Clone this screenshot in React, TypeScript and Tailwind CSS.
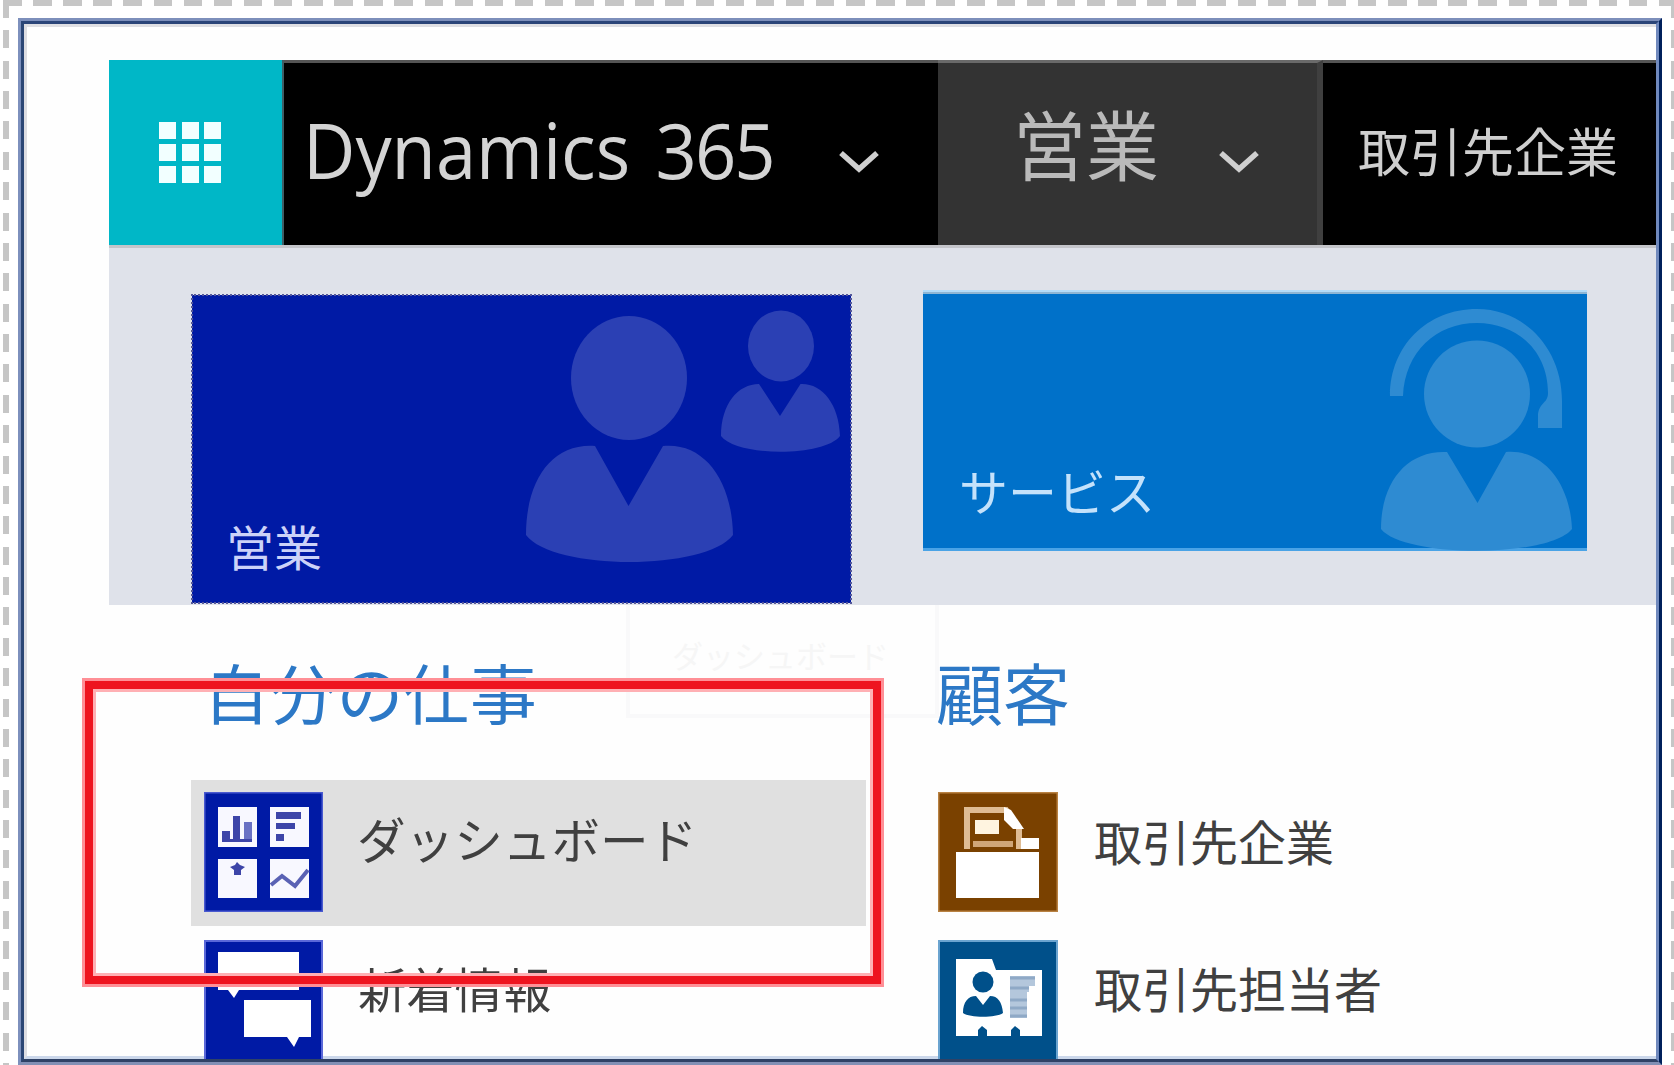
import React from "react";

const JP = "font-['Noto_Sans_CJK_JP','Noto_Sans_CJK_SC',sans-serif]";

function Chevron({ className }: { className: string }) {
  return (
    <svg className={className} width="42" height="26" viewBox="0 0 42 26" fill="none">
      <path d="M3 4 L21 20 L39 4" stroke="#cfcfcf" strokeWidth="5.500" />
    </svg>
  );
}

function Waffle() {
  return (
    <div className="grid grid-cols-3 gap-x-[5.5px] gap-y-[5px] self-start">
      {Array.from({ length: 9 }, (_, i) => (
        <span key={i} className="h-[17px] w-[17px] bg-[#f2ffff]" />
      ))}
    </div>
  );
}

function SalesPeople() {
  return (
    <svg className="absolute left-0 top-0" width="659" height="308" viewBox="192 295 659 308" fill="#2b40b4">
      <ellipse cx="629" cy="378" rx="58" ry="62" />
      <path d="M526 535 C526 480 552 443 595 446 L628.500 506 L663 446 C704 442 732 480 733 535 C706 571 553 571 526 535Z" />
      <ellipse cx="781" cy="346" rx="33" ry="35.500" />
      <path d="M721 436 C721 404 738 384 759 384 L780 416 L800.500 384 C822 383 839 404 840 436 C824 457 737 457 721 436Z" />
    </svg>
  );
}

function ServiceAgent() {
  return (
    <svg className="absolute left-0 top-0" width="664" height="257" viewBox="924 293 664 257" fill="#2e8bd2">
      <ellipse cx="1478" cy="393" rx="53" ry="53.500" />
      <path d="M1382 528 C1382 481 1408 449 1448 451 L1478.500 502 L1507 451 C1543 448 1571 481 1573 528 C1550 557 1405 557 1382 528Z" />
      <path d="M1391 395 C1391 345 1428 308 1478 308 C1526 308 1563 348 1563 400 L1563 427 L1539 427 L1539 413 C1541 401 1549 402 1549 392 C1549 350 1518 322 1478 322 C1437 322 1406 351 1404 395Z" />
    </svg>
  );
}

function DashboardIcon() {
  return (
    <svg width="119" height="120" viewBox="0 0 119 120" className="shrink-0 bg-[#001aa5]">
      <path d="M.75 .75H118.250V119.250H.75Z" fill="none" stroke="#4a5ad0" strokeWidth="1.500" />
      <g fill="#f8f8ff">
        <rect x="14" y="15" width="39" height="40" />
        <rect x="66" y="15" width="39" height="40" />
        <rect x="14" y="67" width="39" height="39" />
        <rect x="66" y="67" width="39" height="39" />
      </g>
      <g fill="#3d45a8">
        <rect x="18" y="39" width="8" height="11" />
        <rect x="29" y="24" width="7" height="26" />
        <rect x="40" y="30" width="8" height="20" fill="#6a72c4" />
        <rect x="18" y="47" width="30" height="3" />
        <rect x="72" y="20" width="25" height="7" />
        <rect x="72" y="31" width="19" height="6" />
        <rect x="72" y="42" width="8" height="7" />
        <path d="M26 75 L31 73 L33 70 L36 73 L41 75 L37 78 L37 83 L30 83 L30 78Z" />
      </g>
      <path d="M67 93 L78 84 L91 94 L104 78" fill="none" stroke="#5a62b4" strokeWidth="4" />
    </svg>
  );
}

function FeedIcon() {
  return (
    <svg width="119" height="119" viewBox="0 0 119 119" className="shrink-0 bg-[#001aa5]">
      <path d="M1 119V1H118V119" fill="none" stroke="#5a68d8" strokeWidth="2" />
      <path d="M14 12H95V50H35L30 58L24 50H14Z" fill="#fff" />
      <path d="M40 60H107V97H95L90 107L83 97H40Z" fill="#fff" />
    </svg>
  );
}

function AccountIcon() {
  return (
    <svg width="120" height="120" viewBox="0 0 120 120" className="shrink-0 bg-[#7a4100]">
      <path d="M.75 .75H119.250V119.250H.75Z" fill="none" stroke="#b98243" strokeWidth="1.500" />
      <path d="M29 57V18H68L81 36V57" fill="none" stroke="#dfbc94" strokeWidth="6" />
      <path d="M66 15L73 18L86 37H75L66 28Z" fill="#fff" />
      <rect x="37" y="28" width="24" height="14" fill="#fff4e0" />
      <rect x="35" y="49" width="40" height="6" fill="#d0a678" />
      <path d="M83 46H101V57H83Z" fill="#fff" />
      <rect x="18" y="60" width="83" height="46" fill="#fff" />
    </svg>
  );
}

function ContactIcon() {
  return (
    <svg width="120" height="119" viewBox="0 0 120 119" className="shrink-0 bg-[#00508a]">
      <path d="M1 119V1H119V119" fill="none" stroke="#6ba4d0" strokeWidth="2" />
      <path d="M18 19H54L58 30H104V96H82V90L77 86L73 90V96H49V90L44 86L40 90V96H18Z" fill="#fff" />
      <circle cx="45" cy="42" r="10.500" fill="#00508a" />
      <path d="M25 73C25 62 30 56 38 56L45 65L52 56C60 56 64 62 65 73C58 78 32 78 25 73Z" fill="#00508a" />
      <path d="M72 36H97V46H91V52H89V78H72Z" fill="#b4c7dc" />
      <path d="M72 38H97M72 48H91M72 60H89M72 68H89M72 76H89" stroke="#8fa9c6" strokeWidth="3" />
    </svg>
  );
}

export default function App() {
  return (
    <div className="relative h-[1065px] w-[1674px] overflow-hidden bg-white pl-[18px] pt-[18px]">
      <div className="absolute left-[3px] top-0 h-[6px] w-[1671px] bg-[repeating-linear-gradient(90deg,#c6c6c6_0px,#c6c6c6_18.5px,#fff_18.5px,#fff_30.11px)]" />
      <div className="absolute left-[3px] top-0 h-[1065px] w-[6px] bg-[repeating-linear-gradient(180deg,#c6c6c6_0px,#c6c6c6_18px,#fff_18px,#fff_30.37px)]" />
      <div className="absolute right-0 top-0 h-[1065px] w-[3px] bg-[repeating-linear-gradient(180deg,#c6c6c6_0px,#c6c6c6_18px,#fff_18px,#fff_30.37px)]" />

      <div className="h-[1047px] w-[1644px] border-[3px] border-b-[#8290b5] border-l-[#7d90bd] border-r-[#00205b] border-t-[#7d8fbb]">
        <div className="h-[1041px] w-[1638px] border-[3px] border-b-[#2f4266] border-l-[#2b4675] border-r-[#7089bd] border-t-[#2b4578]">
          <div className={`h-[1035px] w-[1632px] border-b-[3px] border-l-[3px] border-t-[3px] border-b-[#ccd8eb] border-l-[#dddde2] border-t-[#dfdfe3] bg-[#fefefe] pl-[82px] pt-[33px] ${JP}`}>
            <header className="flex h-[188px] w-[1547px] border-b-[3px] border-b-[#c4c5ca] bg-black">
              <div className="flex w-[175px] justify-center border-r-2 border-r-[#3f5f66] bg-[#00b7c7] pr-[11px] pt-[62px]">
                <Waffle />
              </div>
              <div className="flex w-[654px] border-t-[3px] border-t-[#555] pl-[19px]">
                <span className="mt-[37px] w-[535px] origin-left scale-x-[0.938] whitespace-nowrap font-['Open_Sans','Noto_Sans',sans-serif] text-[77px] font-normal leading-[100px] text-[#d4d4d4]">
                  Dynamics <span className="ml-[7px] tracking-[-2px]">365</span>
                </span>
                <Chevron className="mt-[86px]" />
              </div>
              <div className="flex w-[385px] border-r-[6px] border-t-[3px] border-r-[#3f3f3f] border-t-[#6a6a6a] bg-[#333] pl-[75px]">
                <span className="mt-[41px] w-[205px] origin-left scale-x-[0.96] whitespace-nowrap text-[76px] leading-none text-[#bababa]">営業</span>
                <Chevron className="mt-[86px]" />
              </div>
              <div className="grow border-t-[3px] border-t-[#555] pl-[35px]">
                <span className="mt-[61px] block whitespace-nowrap text-[52px] leading-none text-[#cfcfcf]">取引先企業</span>
              </div>
            </header>

            <section className="flex h-[357px] w-[1547px] gap-[72px] bg-[#dfe2ea] pl-[83px]">
              <div className="relative mt-[47px] h-[308px] w-[659px] bg-[#001aa5] outline-2 -outline-offset-1 outline-dotted outline-[#55589a]">
                <SalesPeople />
                <span className="ml-[34px] mt-[226px] block text-[48px] leading-none text-[#ccd2f8]">営業</span>
              </div>
              <div className="relative mt-[44px] h-[259px] w-[664px] border-b-[3px] border-t-2 border-b-[#4aa3e6] border-t-[#8fb6d4] bg-[#0071c9] shadow-[0_-2px_0_#b5dcf8]">
                <ServiceAgent />
                <span className="relative ml-[36px] mt-[171px] block text-[49px] leading-none text-[#c4e2fb]">サービス</span>
              </div>
            </section>

            <section className="flex pl-[82px]">
              <div className="w-[746px]">
                <h2 className="ml-[12px] mt-[54px] origin-left scale-x-[1.027] text-[65px] font-normal leading-[65px] text-[#2c78c6]">自分の仕事</h2>
                <div className="mt-[56px] flex h-[146px] w-[675px] bg-[#e0e0e0] pl-[13px] pt-[12px]">
                  <DashboardIcon />
                  <span className="ml-[34px] mt-[22px] text-[48.6px] leading-none text-[#404040]">ダッシュボード</span>
                </div>
                <div className="mt-[14px] flex h-[119px] pl-[13px]">
                  <FeedIcon />
                  <span className="ml-[35px] mt-[23px] text-[48.3px] leading-none text-[#404040]">新着情報</span>
                </div>
              </div>
              <div className="pl-px">
                <h2 className="-ml-[2px] mt-[53px] text-[67px] font-normal leading-[65px] text-[#2c78c6]">顧客</h2>
                <div className="mt-[57px] flex h-[146px] pt-[12px]">
                  <AccountIcon />
                  <span className="ml-[36px] mt-[24px] text-[48px] leading-none text-[#404040]">取引先企業</span>
                </div>
                <div className="mt-[14px] flex h-[119px]">
                  <ContactIcon />
                  <span className="ml-[36px] mt-[23px] text-[48px] leading-none text-[#404040]">取引先担当者</span>
                </div>
              </div>
            </section>
          </div>
        </div>
      </div>

      <div className="absolute left-[626px] top-[605px] h-[113px] w-[313px] border-x-4 border-b-4 border-[#f9f9fa]">
        <span className={`ml-[42px] mt-[34px] block text-[31px] leading-none text-[#f6f6f6] ${JP}`}>ダッシュボード</span>
      </div>
      <div className="absolute left-[82px] top-[678px] h-[309px] w-[802px] border-[3px] border-[#ff8f96]">
        <div className="h-full w-full border-[8px] border-[#ee141f]">
          <div className="h-full w-full border-[3px] border-[#ffb0b4]" />
        </div>
      </div>
    </div>
  );
}
